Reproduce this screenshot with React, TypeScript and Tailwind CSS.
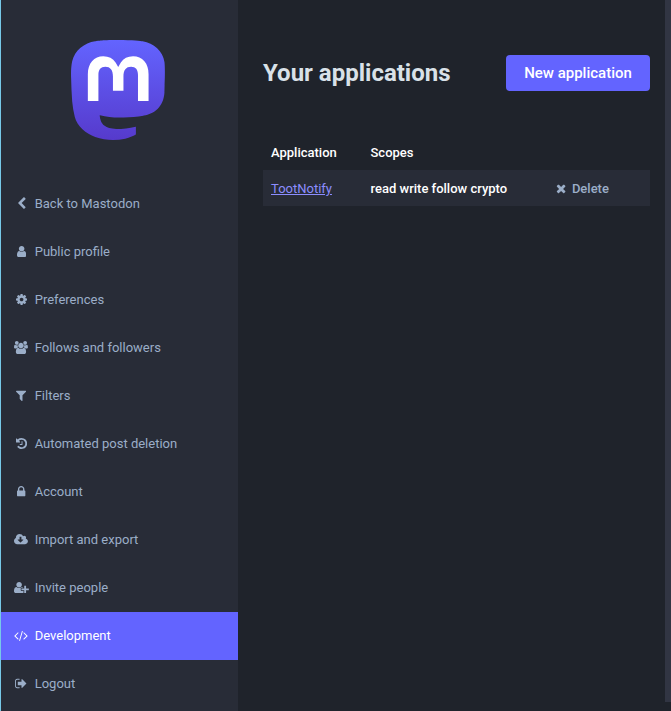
import React from "react";

type Glyph = { box: string; w: string; d: string };

const glyphs: Record<string, Glyph> = {
  back: { box: "256 0 1280 1792", w: "w-[9.29px]", d: "M1427 301l-531 531 531 531q19 19 19 45t-19 45l-166 166q-19 19-45 19t-45-19l-742-742q-19-19-19-45t19-45l742-742q19-19 45-19t45 19l166 166q19 19 19 45t-19 45z" },
  user: { box: "256 0 1280 1792", w: "w-[9.29px]", d: "M1536 1399q0 109-62.5 187t-150.5 78h-854q-88 0-150.5-78t-62.5-187q0-85 8.5-160.5t31.5-152 58.5-131 94-89 134.5-34.5q131 128 313 128t313-128q76 0 134.5 34.5t94 89 58.5 131 31.5 152 8.5 160.5zm-256-887q0 159-112.5 271.5t-271.5 112.5-271.5-112.5-112.5-271.5 112.5-271.5 271.5-112.5 271.5 112.5 112.5 271.5z" },
  cog: { box: "128 0 1536 1792", w: "w-[11.14px]", d: "M1152 896q0-106-75-181t-181-75-181 75-75 181 75 181 181 75 181-75 75-181zm512-109v222q0 12-8 23t-20 13l-185 28q-19 54-39 91 35 50 107 138 10 12 10 25t-9 23q-27 37-99 108t-94 71q-12 0-26-9l-138-108q-44 23-91 38-16 136-29 186-7 28-36 28h-222q-14 0-24.5-8.5t-11.5-21.5l-28-184q-49-16-90-37l-141 107q-10 9-25 9-14 0-25-11-126-114-165-168-7-10-7-23 0-12 8-23 15-21 51-66.5t54-70.5q-27-50-41-99l-183-27q-13-2-21-12.5t-8-23.5v-222q0-12 8-23t19-13l186-28q14-46 39-92-40-57-107-138-10-12-10-24 0-10 9-23 26-36 98.5-107.5t94.5-71.5q13 0 26 10l138 107q44-23 91-38 16-136 29-186 7-28 36-28h222q14 0 24.5 8.5t11.5 21.5l28 184q49 16 90 37l142-107q9-9 24-9 13 0 25 10 129 119 165 170 7 8 7 22 0 12-8 23-15 21-51 66.5t-54 70.5q26 50 41 98l183 28q13 2 21 12.5t8 23.5z" },
  users: { box: "-64 0 1920 1792", w: "w-[13.93px]", d: "M529 896q-162 5-265 128h-134q-82 0-138-40.5t-56-118.5q0-353 124-353 6 0 43.5 21t97.5 42.5 119 21.5q67 0 133-23-5 37-5 66 0 139 81 256zm1071 637q0 120-73 189.5t-194 69.5h-874q-121 0-194-69.5t-73-189.5q0-53 3.5-103.5t14-109 26.5-108.5 43-97.5 62-81 85.5-53.5 111.5-20q10 0 43 21.5t73 48 107 48 135 21.5 135-21.5 107-48 73-48 43-21.5q61 0 111.5 20t85.5 53.5 62 81 43 97.5 26.5 108.5 14 109 3.5 103.5zm-1024-1277q0 106-75 181t-181 75-181-75-75-181 75-181 181-75 181 75 75 181zm704 384q0 159-112.5 271.5t-271.5 112.5-271.5-112.5-112.5-271.5 112.5-271.5 271.5-112.5 271.5 112.5 112.5 271.5zm576 225q0 78-56 118.5t-138 40.5h-134q-103-123-265-128 81-117 81-256 0-29-5-66 66 23 133 23 59 0 119-21.5t97.5-42.5 43.5-21q124 0 124 353zm-128-609q0 106-75 181t-181 75-181-75-75-181 75-181 181-75 181 75 75 181z" },
  filter: { box: "192 0 1408 1792", w: "w-[10.21px]", d: "M1595 295q17 41-14 70l-493 493v742q0 42-39 59-13 5-25 5-27 0-45-19l-256-256q-19-19-19-45v-486l-493-493q-31-29-14-70 17-39 59-39h1280q42 0 59 39z" },
  history: { box: "128 0 1536 1792", w: "w-[11.14px]", d: "M1664 896q0 156-61 298t-164 245-245 164-298 61q-172 0-327-72.5t-264-204.5q-7-10-6.5-22.5t8.5-20.5l137-138q10-9 25-9 16 2 23 12 73 95 179 147t225 52q104 0 198.5-40.5t163.5-109.5 109.5-163.5 40.5-198.5-40.5-198.5-109.5-163.5-163.5-109.5-198.5-40.5q-98 0-188 35.5t-160 101.5l137 138q31 30 14 69-17 40-59 40h-448q-26 0-45-19t-19-45v-448q0-42 40-59 39-17 69 14l130 129q107-101 244.5-156.5t284.5-55.5q156 0 298 61t245 164 164 245 61 298zm-640-288v448q0 14-9 23t-23 9h-320q-14 0-23-9t-9-23v-64q0-14 9-23t23-9h224v-352q0-14 9-23t23-9h64q14 0 23 9t9 23z" },
  lock: { box: "320 0 1152 1792", w: "w-[8.36px]", d: "M640 768h512v-192q0-106-75-181t-181-75-181 75-75 181v192zm832 96v576q0 40-28 68t-68 28h-960q-40 0-68-28t-28-68v-576q0-40 28-68t68-28h32v-192q0-184 132-316t316-132 316 132 132 316v192h32q40 0 68 28t28 68z" },
  cloud: { box: "-64 0 1920 1792", w: "w-[13.93px]", d: "M1216 928q0-14-9-23t-23-9h-224v-352q0-13-9.5-22.5t-22.5-9.5h-192q-13 0-22.5 9.5t-9.5 22.5v352h-224q-13 0-22.5 9.5t-9.5 22.5q0 14 9 23l352 352q9 9 23 9t23-9l351-351q10-12 10-24zm640 224q0 159-112.5 271.5t-271.5 112.5h-1088q-185 0-316.5-131.5t-131.5-316.5q0-130 70-240t188-165q-2-30-2-43 0-212 150-362t362-150q156 0 285.5 87t188.5 231q71-62 166-62 106 0 181 75t75 181q0 76-41 138 130 31 213.5 135.5t83.5 238.5z" },
  invite: { box: "0 0 2048 1792", w: "w-[14.86px]", d: "M704 896q-159 0-271.5-112.5t-112.5-271.5 112.5-271.5 271.5-112.5 271.5 112.5 112.5 271.5-112.5 271.5-271.5 112.5zm960 128h352q13 0 22.5 9.5t9.5 22.5v192q0 13-9.5 22.5t-22.5 9.5h-352v352q0 13-9.5 22.5t-22.5 9.5h-192q-13 0-22.5-9.5t-9.5-22.5v-352h-352q-13 0-22.5-9.5t-9.5-22.5v-192q0-13 9.5-22.5t22.5-9.5h352v-352q0-13 9.5-22.5t22.5-9.5h192q13 0 22.5 9.5t9.5 22.5v352zm-736 224q0 52 38 90t90 38h256v238q-68 50-171 50h-874q-121 0-194-69t-73-190q0-53 3.5-103.5t14-109 26.5-108.5 43-97.5 62-81 85.5-53.5 111.5-20q19 0 39 17 79 61 154.5 91.5t164.5 30.5 164.5-30.5 154.5-91.5q20-17 39-17 132 0 217 96h-223q-52 0-90 38t-38 90v192z" },
  code: { box: "0 0 1920 1792", w: "w-[13.93px]", d: "M617 1399l-50 50q-10 10-23 10t-23-10l-466-466q-10-10-10-23t10-23l466-466q10-10 23-10t23 10l50 50q10 10 10 23t-10 23l-393 393 393 393q10 10 10 23t-10 23zm591-1067l-373 1291q-4 13-15.5 19.5t-23.5 2.5l-62-17q-13-4-19.5-15.5t-2.5-24.5l373-1291q4-13 15.5-19.5t23.5-2.5l62 17q13 4 19.5 15.5t2.5 24.5zm657 651l-466 466q-10 10-23 10t-23-10l-50-50q-10-10-10-23t10-23l393-393-393-393q-10-10-10-23t10-23l50-50q10-10 23-10t23 10l466 466q10 10 10 23t-10 23z" },
  logout: { box: "64 0 1664 1792", w: "w-[12.07px]", d: "M704 1440q0 4 1 20t.5 26.5-3 23.5-10 19.5-20.5 6.5h-320q-119 0-203.5-84.5t-84.5-203.5v-704q0-119 84.5-203.5t203.5-84.5h320q13 0 22.5 9.5t9.5 22.5q0 4 1 20t.5 26.5-3 23.5-10 19.5-20.5 6.5h-320q-66 0-113 47t-47 113v704q0 66 47 113t113 47h312l11.5 1 11.5 3 8 5.5 7 9 2 13.5zm928-544q0 26-19 45l-544 544q-19 19-45 19t-45-19-19-45v-288h-448q-26 0-45-19t-19-45v-384q0-26 19-45t45-19h448v-288q0-26 19-45t45-19 45 19l544 544q19 19 19 45z" },
  times: { box: "192 0 1408 1792", w: "w-[10.21px]", d: "M1490 1322q0 40-28 68l-136 136q-28 28-68 28t-68-28l-294-294-294 294q-28 28-68 28t-68-28l-136-136q-28-28-28-68t28-68l294-294-294-294q-28-28-28-68t28-68l136-136q28-28 68-28t68 28l294 294 294-294q28-28 68-28t68 28l136 136q28 28 28 68t-28 68l-294 294 294 294q28 28 28 68z" },
};

function Icon({ name }: { name: string }) {
  const g = glyphs[name];
  return (
    <span className="mb-px flex w-[16.7px] shrink-0 justify-center">
      <svg viewBox={g.box} className={`h-[13px] shrink-0 ${g.w}`} fill="currentColor" aria-hidden="true">
        <path d={g.d} />
      </svg>
    </span>
  );
}

const links = [
  ["back", "Back to Mastodon"],
  ["user", "Public profile"],
  ["cog", "Preferences"],
  ["users", "Follows and followers"],
  ["filter", "Filters"],
  ["history", "Automated post deletion"],
  ["lock", "Account"],
  ["cloud", "Import and export"],
  ["invite", "Invite people"],
  ["code", "Development"],
  ["logout", "Logout"],
];

function Logo() {
  return (
    <svg viewBox="0 0 75 79" className="h-[100px] w-[95px]" role="img" aria-label="Mastodon">
      <defs>
        <linearGradient id="brand" x1="37" y1="0" x2="37" y2="79" gradientUnits="userSpaceOnUse">
          <stop stopColor="#6364FF" />
          <stop offset="1" stopColor="#563ACC" />
        </linearGradient>
      </defs>
      <path
        fill="url(#brand)"
        d="M73.8393 17.4898C72.6973 9.00165 65.2994 2.31235 56.5296 1.01614C55.05 0.797115 49.4441 0 36.4582 0H36.3612C23.3717 0 20.585 0.797115 19.1054 1.01614C10.5798 2.27644 2.79399 8.28712 0.904997 16.8758C-0.00358524 21.1056 -0.100549 25.7949 0.0682394 30.0965C0.308852 36.2651 0.355538 42.423 0.91577 48.5665C1.30307 52.6474 1.97872 56.6957 2.93763 60.6812C4.73325 68.042 12.0019 74.1676 19.1233 76.6666C26.7478 79.2728 34.9474 79.7055 42.8039 77.9162C43.6682 77.7151 44.5217 77.4817 45.3645 77.216C47.275 76.6092 49.5123 75.9305 51.1571 74.7385L51.2325 74.5948V68.6416L51.0171 68.4729C45.9835 69.675 40.8254 70.2777 35.6502 70.2682C26.7439 70.2682 24.3486 66.042 23.6626 64.2826C23.1113 62.762 22.7612 61.1759 22.6212 59.5646L22.8367 59.3886C27.7864 60.5826 32.8604 61.1853 37.9522 61.1839C39.1768 61.1839 40.3978 61.1839 41.6224 61.1516C46.7435 61.008 52.1411 60.7459 57.1796 59.7621C57.3053 59.7369 57.431 59.7154 57.5387 59.6831C65.4861 58.157 73.0493 53.3672 73.8178 41.2381C73.8465 40.7606 73.9184 36.2364 73.9184 35.7409C73.9219 34.0569 74.4606 23.7949 73.8393 17.4898Z"
      />
      <path
        fill="#fff"
        d="M61.2484 27.0263V48.114H52.8916V27.6475C52.8916 23.3388 51.096 21.1413 47.4437 21.1413C43.4287 21.1413 41.4177 23.7409 41.4177 28.8755V40.0782H33.1111V28.8755C33.1111 23.7409 31.0965 21.1413 27.0815 21.1413C23.4507 21.1413 21.6371 23.3388 21.6371 27.6475V48.114H13.2839V27.0263C13.2839 22.7176 14.384 19.2946 16.5843 16.7572C18.8539 14.2258 21.8311 12.926 25.5264 12.926C29.8036 12.926 33.0357 14.5705 35.1905 17.8559L37.2698 21.346L39.3527 17.8559C41.5074 14.5705 44.7395 12.926 49.0095 12.926C52.7013 12.926 55.6784 14.2258 57.9553 16.7572C60.1531 19.2922 61.2508 22.7152 61.2484 27.0263Z"
      />
    </svg>
  );
}

export default function App() {
  return (
    <div className="flex h-[711px] w-[671px] overflow-hidden border-l border-[#77c9e8] bg-[#1f232b] font-['Roboto',sans-serif] text-[13px] leading-[18px] text-white">
      <aside className="flex w-[237px] shrink-0 flex-col bg-[#282c37]">
        <a href="#" className="flex justify-center pt-10 pr-[2px] pb-10">
          <Logo />
        </a>
        <nav>
          {links.map(([icon, label]) => (
            <a
              key={icon}
              href="#"
              className={`flex h-12 items-center gap-[5px] pl-3 ${icon === "code" ? "bg-[#6364ff] text-white" : "text-[#9baec8]"}`}
            >
              <Icon name={icon} />
              <span>{label}</span>
            </a>
          ))}
        </nav>
      </aside>
      <main className="min-w-0 flex-1 pt-[55px] pr-[15px] pl-[25px]">
        <header className="flex items-center justify-between">
          <h2 className="text-2xl font-bold leading-9 text-[#d9e1e8]">Your applications</h2>
          <a href="#" className="flex h-9 w-36 items-center justify-center rounded bg-[#6364ff] text-[15px] font-medium">
            New application
          </a>
        </header>
        <table className="mt-11 w-full table-fixed border-collapse text-left">
          <colgroup>
            <col className="w-[99.5px]" />
            <col className="w-[185px]" />
            <col />
          </colgroup>
          <thead>
            <tr className="h-[35px]">
              <th className="px-2 font-medium">Application</th>
              <th className="px-2 font-medium">Scopes</th>
              <th />
            </tr>
          </thead>
          <tbody>
            <tr className="h-9 bg-[#282c37]">
              <td className="px-2 pt-[2px]">
                <a href="#" className="text-[#8c8dff] underline">TootNotify</a>
              </td>
              <td className="px-2 pt-[2px] font-medium">read write follow crypto</td>
              <td className="pt-[2px]">
                <a href="#" className="flex items-center gap-[2px] pl-[5.7px] font-medium text-[#9baec8]">
                  <Icon name="times" />
                  <span>Delete</span>
                </a>
              </td>
            </tr>
          </tbody>
        </table>
      </main>
      <div className="h-[702px] w-[6px] shrink-0 bg-[#313543]" />
    </div>
  );
}
